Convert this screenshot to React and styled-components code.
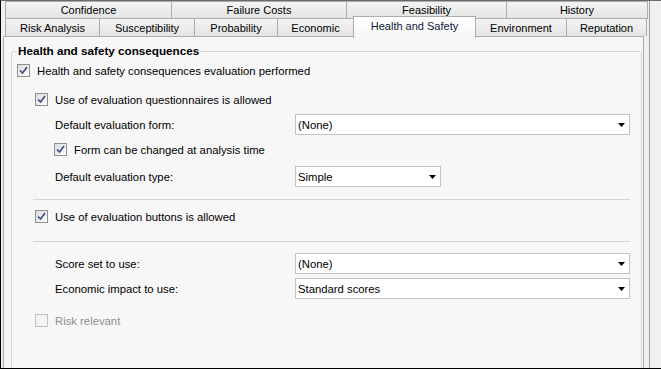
import React from 'react';
import styled, { createGlobalStyle } from 'styled-components';

const GlobalStyle = createGlobalStyle`
  html, body {
    margin: 0;
    padding: 0;
    background: #f0f0f0;
  }
  body {
    font-family: "Liberation Sans", Arial, sans-serif;
    font-size: 11px;
    color: #000;
  }
`;

const topTabs = [
  { label: 'Confidence', w: 167 },
  { label: 'Failure Costs', w: 176 },
  { label: 'Feasibility', w: 161 },
  { label: 'History', w: 142 },
];

const bottomTabs = [
  { label: 'Risk Analysis', w: 95 },
  { label: 'Susceptibility', w: 96 },
  { label: 'Probability', w: 84 },
  { label: 'Economic', w: 77 },
  { label: 'Health and Safety', w: 123, active: true },
  { label: 'Environment', w: 92 },
  { label: 'Reputation', w: 81 },
];

const Window = styled.div`
  width: 661px;
  height: 369px;
  box-sizing: border-box;
  border-left: 1px solid #000;
  border-top: 1px solid #6a6a6a;
  border-bottom: 1px solid #000;
  display: flex;
  overflow: hidden;
  background: #f0f0f0;
`;

const Main = styled.div`
  width: 648px;
  display: flex;
  flex-direction: column;
`;

const Gutter = styled.div`
  flex: 1;
  border-left: 1px solid #a0a0a0;
`;

const TabRow = styled.div`
  display: flex;
  align-items: flex-start;
  height: 18px;
  padding-left: 3px;
  margin-top: ${p => p.$mt || 0}px;
`;

const Tab = styled.div`
  position: relative;
  width: ${p => p.$w}px;
  height: ${p => (p.$active ? 22 : 18)}px;
  margin-top: ${p => (p.$active ? -2 : 0)}px;
  margin-left: -1px;
  box-sizing: border-box;
  border: 1px solid #acacac;
  border-bottom: ${p => (p.$active || p.$flat ? 'none' : '1px solid #acacac')};
  background: ${p =>
    p.$active
      ? 'linear-gradient(#ffffff, #f7f7f7)'
      : 'linear-gradient(#f4f4f4, #e4e4e4)'};
  display: flex;
  align-items: ${p => (p.$active ? 'flex-start' : 'center')};
  padding-top: ${p => (p.$active ? 3 : 0)}px;
  justify-content: center;
  white-space: nowrap;
  color: ${p => (p.$active ? '#0a1a3a' : '#000')};
  z-index: ${p => (p.$active ? 2 : 0)};
  &:first-child {
    margin-left: 1px;
  }
`;

const Panel = styled.div`
  flex: 1;
  margin-left: 2px;
  width: 641px;
  box-sizing: border-box;
  border: 1px solid #acacac;
  border-bottom: none;
  background: #f7f7f7;
  padding: 7px 1px 0 7px;
  overflow: hidden;
  font-size: 11.3px;
`;

const GroupBox = styled.fieldset`
  margin: 0;
  min-width: 0;
  height: 340px;
  box-sizing: border-box;
  border: 1px solid #d5d5d5;
  border-radius: 3px;
  padding: 2px 11px 0 5px;
`;

const Legend = styled.legend`
  padding: 0 1px;
  font-weight: bold;
  line-height: 14px;
  font-size: 11.7px;
`;

const Stack = styled.div`
  display: flex;
  flex-direction: column;
  padding-left: ${p => p.$indent || 0}px;
`;

const Row = styled.div`
  display: flex;
  align-items: center;
  height: 21px;
  margin-top: ${p => p.$mt || 0}px;
  padding-left: ${p => p.$indent || 0}px;
  color: ${p => (p.$disabled ? '#8d8d8d' : '#000')};
`;

const FieldRow = styled.div`
  display: grid;
  grid-template-columns: 240px ${p => (p.$narrow ? '146px' : '1fr')};
  align-items: center;
  height: 21px;
  margin-top: ${p => p.$mt || 0}px;
  padding-left: 20px;
`;

const Box = styled.span`
  width: 13px;
  height: 13px;
  box-sizing: border-box;
  margin-right: 7px;
  border: 1px solid ${p => (p.$disabled ? '#c2c2c2' : '#8e8f8f')};
  background: ${p =>
    p.$disabled ? '#f4f4f4' : 'linear-gradient(135deg, #dcdcdc, #ffffff)'};
  display: flex;
  align-items: center;
  justify-content: center;
  flex-shrink: 0;
`;

const Separator = styled.div`
  height: 1px;
  background: #d5d5d5;
  margin-top: ${p => p.$mt}px;
  margin-left: -2px;
`;

const Select = styled.div`
  height: 21px;
  box-sizing: border-box;
  border: 1px solid #c3c3c3;
  background: #fff;
  display: flex;
  align-items: center;
  justify-content: space-between;
  padding: 0 4px 0 2px;
`;

const Checkbox = ({ checked, disabled, children, indent, mt }) => (
  <Row $indent={indent} $mt={mt} $disabled={disabled}>
    <Box $disabled={disabled}>
      {checked && (
        <svg width="9" height="9" viewBox="0 0 9 9">
          <path d="M1 4.5 L3.5 7 L8 1" fill="none" stroke="#3d5187" strokeWidth="1.7" />
        </svg>
      )}
    </Box>
    {children}
  </Row>
);

const Dropdown = ({ value }) => (
  <Select>
    <span>{value}</span>
    <svg width="7" height="4" viewBox="0 0 7 4">
      <polygon points="0,0 7,0 3.5,4" fill="#000" />
    </svg>
  </Select>
);

const Field = ({ label, value, narrow, mt }) => (
  <FieldRow $narrow={narrow} $mt={mt}>
    <span>{label}</span>
    <Dropdown value={value} />
  </FieldRow>
);

export default function App() {
  return (
    <>
      <GlobalStyle />
      <Window>
        <Main>
          <TabRow>
            {topTabs.map(t => (
              <Tab key={t.label} $w={t.w}>{t.label}</Tab>
            ))}
          </TabRow>
          <TabRow $mt={-1}>
            {bottomTabs.map(t => (
              <Tab key={t.label} $w={t.w} $active={t.active} $flat>
                {t.label}
              </Tab>
            ))}
          </TabRow>
          <Panel>
            <GroupBox>
              <Legend>Health and safety consequences</Legend>
              <Checkbox checked>Health and safety consequences evaluation performed</Checkbox>
              <Stack $indent={18}>
                <Checkbox checked mt={8}>Use of evaluation questionnaires is allowed</Checkbox>
                <Field label="Default evaluation form:" value="(None)" mt={4} />
                <Checkbox checked indent={19} mt={4}>Form can be changed at analysis time</Checkbox>
                <Field label="Default evaluation type:" value="Simple" narrow mt={6} />
                <Separator $mt={12} />
                <Checkbox checked mt={6}>Use of evaluation buttons is allowed</Checkbox>
                <Separator $mt={14} />
                <Field label="Score set to use:" value="(None)" mt={11} />
                <Field label="Economic impact to use:" value="Standard scores" mt={4} />
                <Checkbox disabled mt={11}>Risk relevant</Checkbox>
              </Stack>
            </GroupBox>
          </Panel>
        </Main>
        <Gutter />
      </Window>
    </>
  );
}
